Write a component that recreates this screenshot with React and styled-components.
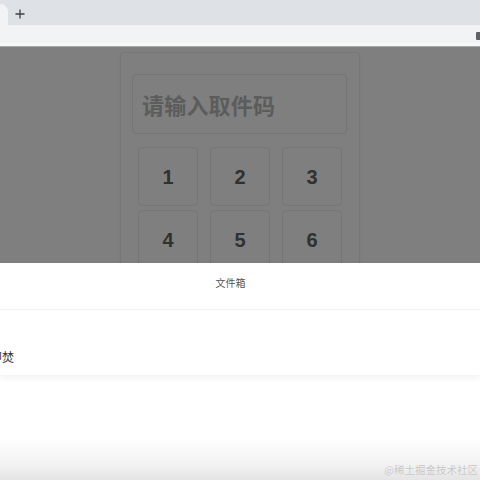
import React from "react";
import styled, { createGlobalStyle } from "styled-components";

const Global = createGlobalStyle`
  html, body { margin: 0; padding: 0; background: #fff; }
  body { font-family: "Liberation Sans", "Noto Sans CJK SC", sans-serif; }
  * { box-sizing: border-box; }
`;

const Screen = styled.div`
  width: 480px;
  height: 480px;
  display: flex;
  flex-direction: column;
  overflow: hidden;
  background: #fff;
`;

const TabStrip = styled.div`
  height: 25px;
  flex: none;
  background: #dee1e6;
  display: flex;
  align-items: flex-end;
`;

const ActiveTab = styled.div`
  width: 8px;
  height: 21px;
  background: #f1f3f4;
  border-top-right-radius: 8px;
`;

const NewTab = styled.div`
  width: 24px;
  height: 21px;
  display: flex;
  align-items: center;
  justify-content: center;
  margin-bottom: 1px;
  color: #3c4043;
`;

const Toolbar = styled.div`
  height: 22px;
  flex: none;
  background: #f1f3f4;
  border-bottom: 1px solid #a9a9a9;
  box-shadow: inset 0 -3px 0 #f7f8f8;
  display: flex;
  align-items: center;
  justify-content: flex-end;
  padding-top: 1px;
`;

const ExtIcon = styled.div`
  width: 5px;
  height: 8px;
  margin-right: -1px;
  background: #5f6368;
  border-radius: 1px 0 0 1px;
`;

const Viewport = styled.div`
  position: relative;
  height: 216px;
  flex: none;
  overflow: hidden;
  background: #fff;
`;

const Card = styled.div`
  width: 240px;
  margin: 5px auto 0;
  border: 1px solid #ececec;
  border-radius: 3px;
  padding: 21px 12px 20px 11px;
  box-shadow: 0 1px 4px rgba(0, 0, 0, 0.04);
`;

const CodeInput = styled.div`
  height: 60px;
  border: 1px solid #ebebeb;
  border-radius: 4px;
  display: flex;
  align-items: center;
  padding-left: 9px;
  font-family: "Noto Sans CJK SC", sans-serif;
  font-size: 22px;
  font-weight: 700;
  color: #b8b8b8;
  letter-spacing: 0.2px;
`;

const Keypad = styled.div`
  display: grid;
  grid-template-columns: repeat(3, 60px);
  grid-auto-rows: 59px;
  column-gap: 12px;
  row-gap: 4px;
  justify-content: center;
  margin-top: 13px;
  margin-left: 1px;
`;

const Key = styled.div`
  border: 1px solid #ebebeb;
  border-radius: 4px;
  display: flex;
  align-items: center;
  justify-content: center;
  font-family: "Liberation Sans", Arial, sans-serif;
  font-size: 20px;
  font-weight: 700;
  color: #626262;
  padding-top: 2px;
`;

const Dim = styled.div`
  position: absolute;
  inset: 0;
  background: rgba(0, 0, 0, 0.5);
`;

const Sheet = styled.div`
  flex: none;
  background: #fff;
  box-shadow: 0 3px 7px rgba(0, 0, 0, 0.06);
  position: relative;
  z-index: 1;
`;

const SheetHeader = styled.div`
  height: 47px;
  display: flex;
  align-items: center;
  justify-content: center;
  border-bottom: 1px solid #f3f3f3;
  font-family: "Noto Sans CJK SC", sans-serif;
  font-size: 10px;
  color: #555;
  padding: 0 19px 8px 0;
`;

const SheetItem = styled.div`
  height: 65px;
  display: flex;
  align-items: flex-end;
  padding-bottom: 10px;
  font-family: "Noto Sans CJK SC", sans-serif;
  font-size: 12px;
  color: #333;
`;

const ItemLabel = styled.span`
  margin-left: -10px;
`;

const Rest = styled.div`
  flex: 1;
  display: flex;
  align-items: flex-end;
  justify-content: flex-end;
  background: linear-gradient(to bottom, #fff 0%, #fff 60%, #f2f2f2 85%, #e4e4e4 100%);
  padding: 0 2px 3px 0;
`;

const Watermark = styled.span`
  font-family: "Noto Sans CJK SC", sans-serif;
  font-size: 10.5px;
  color: #c6c6c6;
  text-shadow: 0 0 1px rgba(255, 255, 255, 0.8);
`;

export default function App() {
  return (
    <Screen>
      <Global />
      <TabStrip>
        <ActiveTab />
        <NewTab>
          <svg width="10" height="10" viewBox="0 0 10 10">
            <path d="M5 0.5v9M0.5 5h9" stroke="#3c4043" strokeWidth="1.3" fill="none" />
          </svg>
        </NewTab>
      </TabStrip>
      <Toolbar>
        <ExtIcon />
      </Toolbar>
      <Viewport>
        <Card>
          <CodeInput>请输入取件码</CodeInput>
          <Keypad>
            {["1", "2", "3", "4", "5", "6"].map((d) => (
              <Key key={d}>{d}</Key>
            ))}
          </Keypad>
        </Card>
        <Dim />
      </Viewport>
      <Sheet>
        <SheetHeader>文件箱</SheetHeader>
        <SheetItem>
          <ItemLabel>即焚</ItemLabel>
        </SheetItem>
      </Sheet>
      <Rest>
        <Watermark>@稀土掘金技术社区</Watermark>
      </Rest>
    </Screen>
  );
}
